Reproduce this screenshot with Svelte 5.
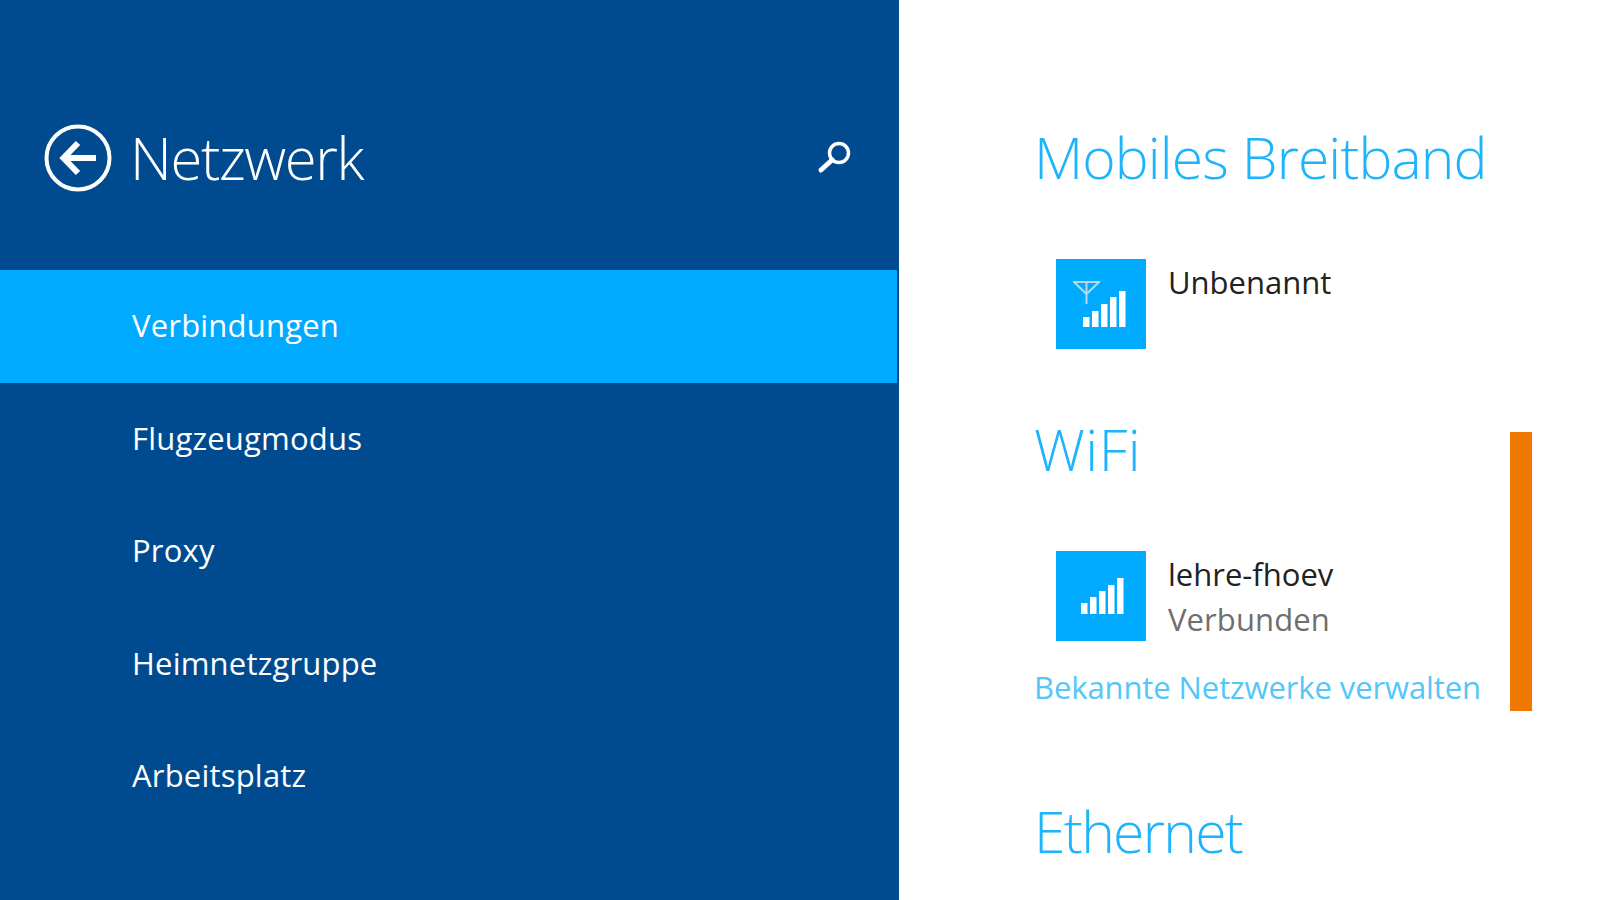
<script>
  const navItems = ['Verbindungen', 'Flugzeugmodus', 'Proxy', 'Heimnetzgruppe', 'Arbeitsplatz'];
  let active = $state(0);
</script>

<div class="page">
  <aside class="side">
    <header class="side-head">
      <button class="back" aria-label="Zurück">
        <svg width="68" height="68" viewBox="0 0 68 68" fill="none" stroke="#fff">
          <circle cx="34" cy="34" r="31.5" stroke-width="4" />
          <path d="M52 34H22" stroke-width="6" />
          <path d="M34 19L19.500 34L34 49" stroke-width="6" />
        </svg>
      </button>
      <h1>Netzwerk</h1>
      <svg class="search" width="36" height="36" viewBox="0 0 36 36" fill="none" stroke="#fff">
        <circle cx="22" cy="14" r="9.500" stroke-width="3.500" />
        <path d="M15 21L4 31" stroke-width="5" stroke-linecap="round" />
      </svg>
    </header>

    <nav class="nav">
      {#each navItems as item, i}
        <button class="nav-item" class:active={active === i} onclick={() => (active = i)}>{item}</button>
      {/each}
    </nav>
  </aside>

  <main class="content">
    <h2 class="first">Mobiles Breitband</h2>
    <div class="net">
      <div class="tile">
        <svg width="90" height="90" viewBox="0 0 90 90">
          <path d="M17 23H44M18 23L30.500 35L43 23M30.500 23V45" fill="none" stroke="#b9d5e6" stroke-width="2" />
          <g fill="#fff">
            <rect x="27" y="58" width="6.500" height="10" />
            <rect x="36" y="52" width="6.500" height="16" />
            <rect x="45" y="45" width="6.500" height="23" />
            <rect x="54" y="38" width="6.500" height="30" />
            <rect x="63" y="32" width="6.500" height="36" />
          </g>
        </svg>
      </div>
      <div class="net-text">
        <div class="net-name">Unbenannt</div>
      </div>
    </div>

    <h2 class="wifi">WiFi</h2>
    <div class="net">
      <div class="tile">
        <svg width="90" height="90" viewBox="0 0 90 90" fill="#fff">
          <rect x="25" y="52" width="6.500" height="11" />
          <rect x="34" y="46" width="6.500" height="17" />
          <rect x="43" y="40" width="6.500" height="23" />
          <rect x="52" y="34" width="6.500" height="29" />
          <rect x="61" y="27" width="6.500" height="36" />
        </svg>
      </div>
      <div class="net-text">
        <div class="net-name">lehre-fhoev</div>
        <div class="net-status">Verbunden</div>
      </div>
    </div>
    <div class="manage">Bekannte Netzwerke verwalten</div>

    <h2 class="ethernet">Ethernet</h2>

    <div class="scrollbar"></div>
  </main>
</div>

<style>
  :global(body) { margin: 0; background: #fff; }

  .page {
    display: flex;
    width: 1600px;
    height: 900px;
    overflow: hidden;
    font-family: "Open Sans", "Liberation Sans", sans-serif;
  }

  .side { width: 899px; flex: none; background: #004b8f; color: #fff; }
  .side-head { height: 270px; display: flex; align-items: center; box-sizing: border-box; padding: 45px 46px 0 44px; }
  .back { width: 68px; height: 68px; padding: 0; border: none; background: none; cursor: pointer; }
  .back svg { display: block; }
  .side-head h1 { margin: 0 0 0 18px; flex: 1; font-size: 58px; font-weight: 300; letter-spacing: -1.4px; }
  .search { margin-top: -2px; }

  .nav { display: flex; flex-direction: column; }
  .nav-item {
    height: 112.500px;
    width: 897px;
    padding: 0 0 2px 132px;
    border: none;
    background: none;
    color: #fff;
    font: 400 31px "Open Sans", "Liberation Sans", sans-serif;
    letter-spacing: 0.2px;
    text-align: left;
    cursor: pointer;
  }
  .nav-item.active { background: #00aaff; }

  .content { position: relative; flex: 1; padding: 121px 0 0 135px; }
  h2 { margin: 0; color: #1cb4fc; font-size: 57px; font-weight: 300; line-height: 72px; }
  .first { letter-spacing: -0.9px; }
  .wifi { margin-top: 64px; letter-spacing: 0.5px; }
  .ethernet { margin-top: 88px; letter-spacing: -1.7px; }

  .net { display: flex; gap: 22px; margin: 66px 0 0 22px; }
  .tile { width: 90px; height: 90px; background: #00aaff; flex: none; }
  .tile svg { display: block; }
  .net-text { margin-top: 1px; }
  .net-name { font-size: 31px; line-height: 45px; color: #222; letter-spacing: 0; }
  .net-status { font-size: 31px; line-height: 45px; color: #6f6f6f; letter-spacing: 0.1px; }
  .manage { font-size: 31px; line-height: 40px; color: #54c6f8; letter-spacing: -0.1px; margin-top: 25px; margin-bottom: 1px; }

  .scrollbar { position: absolute; left: 611px; top: 432px; width: 22px; height: 279px; background: #ef7800; }
</style>
